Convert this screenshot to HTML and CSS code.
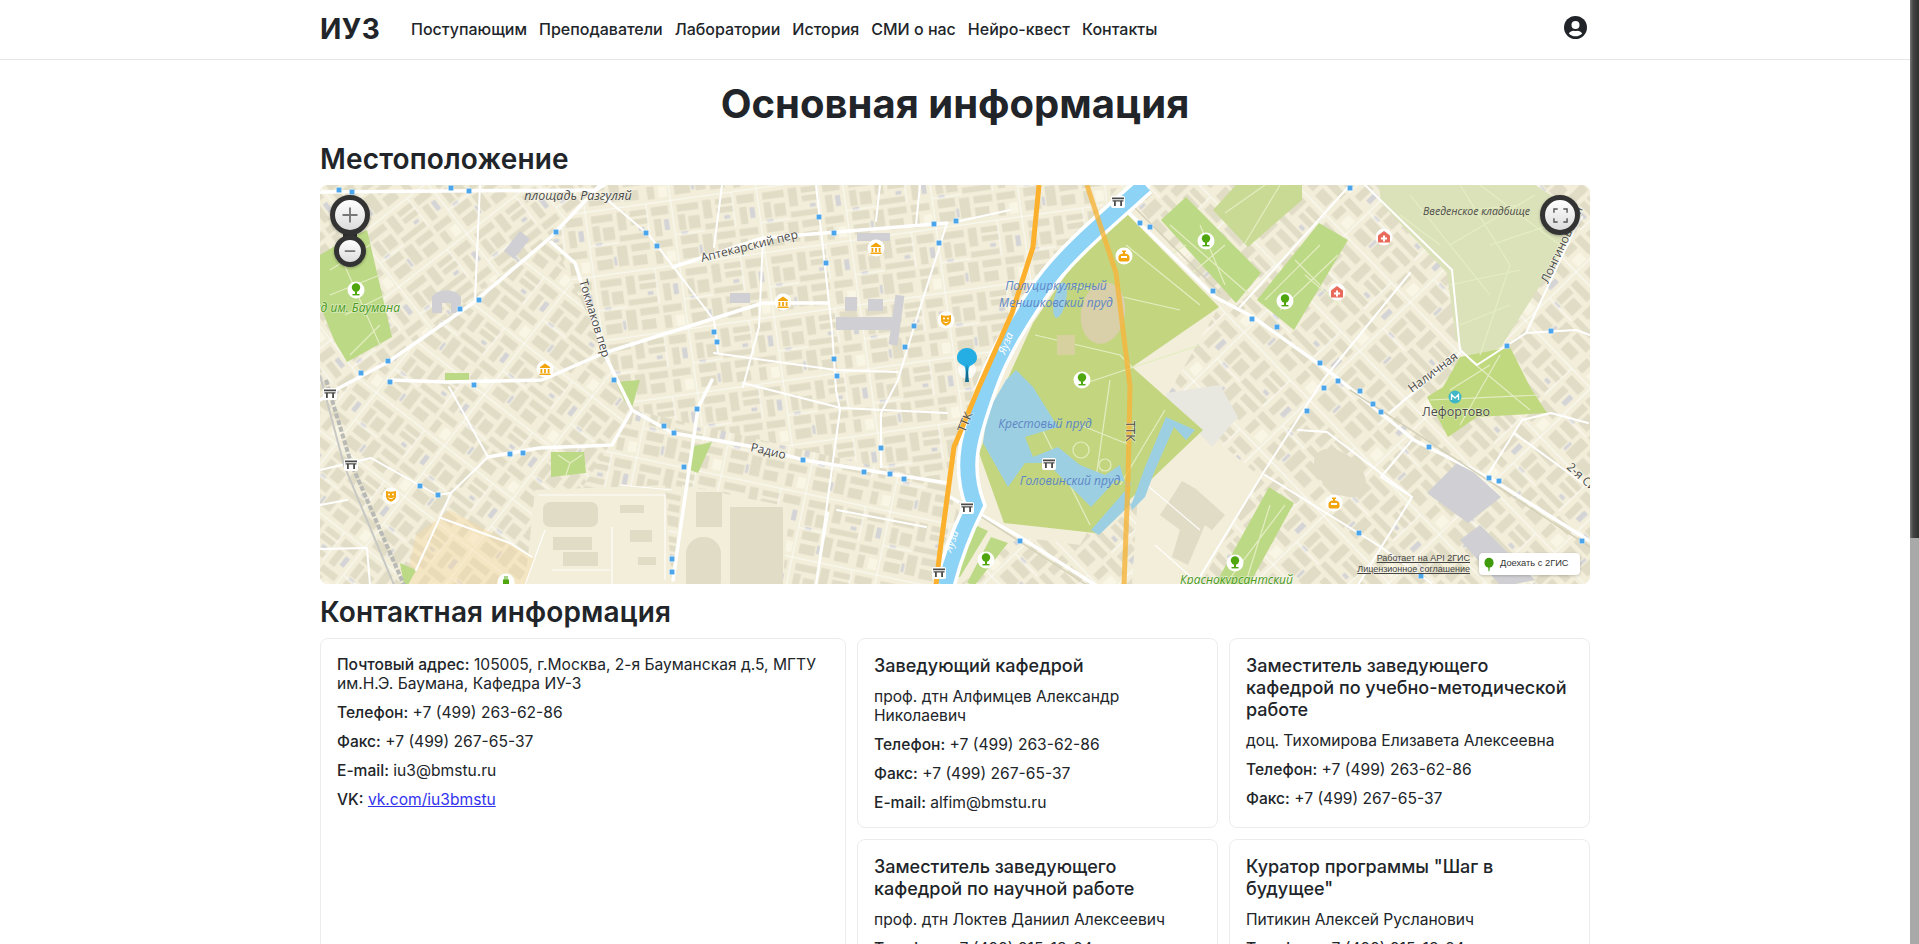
FILE: index.html
```html
<!DOCTYPE html>
<html lang="ru">
<head>
<meta charset="utf-8">
<title>ИУ3 — Основная информация</title>
<link rel="stylesheet" href="styles.css">
</head>
<body>
<header class="navbar">
  <div class="navbar-inner">
    <a class="brand" href="#">ИУЗ</a>
    <nav class="nav">
      <a href="#">Поступающим</a>
      <a href="#">Преподаватели</a>
      <a href="#">Лаборатории</a>
      <a href="#">История</a>
      <a href="#">СМИ о нас</a>
      <a href="#">Нейро-квест</a>
      <a href="#">Контакты</a>
    </nav>
    <svg class="user-icon" viewBox="0 0 24 24" aria-label="Профиль">
      <circle cx="12" cy="12" r="12" fill="#212529"/>
      <circle cx="12" cy="9.4" r="4.2" fill="#fff"/>
      <path fill="#fff" d="M12 21.2c-2.7 0-5.200-1.100-6.900-3 1.100-1.800 3-2.900 5-2.900.6 0 1.200.4 1.900.4s1.300-.4 1.900-.4c2 0 3.900 1.100 5 2.900-1.700 1.900-4.200 3-6.900 3z"/>
    </svg>
  </div>
</header>

<main class="content">
  <h1 class="page-title">Основная информация</h1>
  <h2 class="section-title section-first">Местоположение</h2>

  <div class="map">
    <svg class="map-canvas" viewBox="0 0 1270 400" width="1270" height="400">
      <defs>
        <g id="tile">
          <rect width="120" height="90" fill="#f2eeda"/>
          <g fill="#e0dcc6">
            <rect x="6" y="6" width="30" height="10"/><rect x="6" y="20" width="10" height="22"/><rect x="42" y="5" width="12" height="26"/>
            <rect x="60" y="6" width="24" height="8"/><rect x="60" y="18" width="24" height="8"/><rect x="90" y="5" width="24" height="12"/>
            <rect x="92" y="22" width="10" height="24"/><rect x="20" y="24" width="16" height="18"/><rect x="42" y="38" width="40" height="8"/>
            <rect x="6" y="50" width="24" height="12"/><rect x="36" y="52" width="14" height="28"/><rect x="56" y="52" width="26" height="10"/>
            <rect x="56" y="68" width="20" height="14"/><rect x="88" y="52" width="26" height="10"/><rect x="88" y="66" width="10" height="18"/>
            <rect x="6" y="68" width="22" height="14"/>
          </g>
          <g fill="#d4d4d7">
            <rect x="70" y="30" width="8" height="5"/><rect x="106" y="24" width="7" height="15"/><rect x="30" y="66" width="4" height="12"/><rect x="8" y="44" width="9" height="4"/>
          </g>
          <rect x="104" y="68" width="12" height="15" fill="#f9f6e6"/>
          <path d="M0 89H120M119 0V90M0 47H40M84 0V48" stroke="#fff" stroke-width="1.200" fill="none" opacity=".85"/>
        </g>
        <pattern id="cityA" width="120" height="90" patternUnits="userSpaceOnUse" patternTransform="rotate(-38) scale(.72)"><use href="#tile"/></pattern>
        <pattern id="cityB" width="120" height="90" patternUnits="userSpaceOnUse" patternTransform="rotate(-8) scale(.72)"><use href="#tile"/></pattern>
        <pattern id="cityC" width="120" height="90" patternUnits="userSpaceOnUse" patternTransform="rotate(38) scale(.72)"><use href="#tile"/></pattern>
        <pattern id="cityD" width="120" height="90" patternUnits="userSpaceOnUse" patternTransform="rotate(12) scale(.72) translate(30 10)"><use href="#tile"/></pattern>
        <pattern id="cityE" width="120" height="90" patternUnits="userSpaceOnUse" patternTransform="rotate(46) scale(.78)"><use href="#tile"/></pattern>

        <g id="poi-bg"><circle r="8.500" fill="#fff"/></g>
        <g id="i-tree">
          <use href="#poi-bg"/>
          <circle cy="-2.500" r="4.200" fill="#4fa60e"/><rect x="-1" y="0" width="2" height="5" fill="#4fa60e"/><rect x="-3.500" y="4" width="7" height="1.400" fill="#4fa60e"/>
        </g>
        <g id="i-museum">
          <use href="#poi-bg"/>
          <path fill="#f2a50c" d="M-5-2 0-5.500 5-2v1H-5zM-4.500 0h1.800v4h-1.800zM-.9 0H.9v4H-.9zM2.700 0h1.800v4H2.700zM-5.500 4.500h11V6h-11z"/>
        </g>
        <g id="i-theatre">
          <use href="#poi-bg"/>
          <path fill="#f2a50c" d="M-5-5C-2-4 2-4 5-5V0C5 3 2 5.500 0 5.500S-5 3-5 0z"/>
          <circle cx="-2" cy="-1.500" r="1" fill="#fff"/><circle cx="2" cy="-1.500" r="1" fill="#fff"/><path d="M-2.500 1.500C-1 3 1 3 2.500 1.500" stroke="#fff" fill="none"/>
        </g>
        <g id="i-bottle">
          <use href="#poi-bg"/>
          <path fill="#f2a50c" d="M-2-5.500h4V-4H1v1.500c2 0 4.500 1.500 4.500 3.500v2.500C5.500 5 4 5.500 3 5.500h-6C-4 5.500-5.500 5-5.500 3.500V1C-5.500-1-3-2.500-1-2.500V-4H-2z"/>
          <rect x="-3" y="0" width="6" height="2" fill="#fff"/>
        </g>
        <g id="i-hospital">
          <use href="#poi-bg"/>
          <path fill="#e96a5b" d="M0-6 6-1.500V5.500H-6V-1.500z"/>
          <path fill="#fff" d="M-1-1.500H1V.5H3V2.500H1V4.500H-1V2.500H-3V.5H-1z"/>
        </g>
        <g id="i-bridge">
          <rect x="-7" y="-6" width="14" height="12" rx="2" fill="#fff"/>
          <path fill="#4a4a48" d="M-6-4.500H6V-2.800H-6zM-5.500-1.800H5.500V-.6H-5.500zM-4-.6h1.800V4H-4zM2.200-.6H4V4H2.200z"/>
        </g>
        <g id="i-plug">
          <use href="#poi-bg"/>
          <path fill="#4fa60e" d="M-3-2.500h1.500V-6H-.5V-2.500H.5V-6h1V-2.500H3V2C3 3.500 2 4 1 4V6H-1V4C-2 4-3 3.500-3 2z"/>
        </g>
        <rect id="stop" x="-2.700" y="-2.700" width="5.400" height="5.400" rx="1.200" fill="#4aa5ea" stroke="#fff" stroke-width=".5"/>
      </defs>

      <rect width="1270" height="400" fill="#f2eeda"/>

      <polygon fill="url(#cityA)" points="0,0 284,0 231,52 68,177 0,215"/>
      <polygon fill="url(#cityB)" points="284,0 800,0 700,120 650,240 627,298 435,262 312,225 231,52"/>
      <polygon fill="url(#cityC)" points="0,215 68,177 231,52 312,225 292,260 200,400 0,400"/>
      <polygon fill="url(#cityD)" points="312,225 627,298 640,330 620,400 200,400"/>
      <polygon fill="url(#cityE)" points="800,0 1270,0 1270,400 640,400 700,352 760,360 900,120"/>

      <polygon fill="#f2eeda" points="215,305 345,300 352,400 205,400"/>
      <polygon fill="#f2eeda" points="362,300 470,322 462,400 352,400"/>
      <polygon fill="#f2eeda" points="820,275 870,232 940,292 880,400 812,400"/>
      <polygon fill="#f7d9a0" opacity=".4" points="96,350 130,325 215,372 205,400 85,400"/>

      <g fill="#e0dcc6">
        <rect x="223" y="317" width="55" height="25" rx="7"/><rect x="233" y="352" width="39" height="13"/><rect x="243" y="367" width="35" height="14"/>
        <rect x="410" y="322" width="53" height="77"/><rect x="376" y="307" width="26" height="35"/>
        <rect x="366" y="352" width="35" height="60" rx="17"/>
        <rect x="300" y="320" width="24" height="8"/><rect x="310" y="345" width="22" height="12"/><rect x="318" y="372" width="18" height="8"/>
        <path d="M862 296 876 304 905 330 892 345 885 340 868 380 852 372 860 345 840 330 848 318z"/>
        <ellipse cx="1020" cy="288" rx="30" ry="19" transform="rotate(40 1020 288)"/>
      </g>
      <g fill="none" stroke="#fff" stroke-width="1.200" opacity=".9">
        <path d="M218 310H345V395M225 345 205 400M292 342V400M352 305 300 300M232 385H290"/>
        <path d="M815 290 880 345M835 360 880 400"/>
      </g>
      <polygon fill="#e9e8e0" points="846,208 900,200 918,232 892,262 872,240 850,228"/>
      <g fill="#d0d0d4">
        <polygon points="1107,308 1140,275 1181,312 1148,338"/>
        <path d="M112 128V112a15 9 0 0 1 29 0V128h-10V118h-9v10z"/>
        <rect x="516" y="132" width="61" height="13"/><rect x="537" y="48" width="33" height="8"/>
        <polygon points="184,66 200,46 210,54 194,74"/>
        <rect x="572" y="110" width="9" height="50" transform="rotate(8 576 135)"/>
        <rect x="525" y="112" width="12" height="14"/><rect x="548" y="114" width="15" height="12"/>
        <rect x="410" y="108" width="20" height="10"/>
        <polygon points="1140,355 1160,340 1215,395 1190,400 1180,400"/>
        <rect x="845" y="240" width="6" height="34" transform="rotate(30 848 257)"/>
      </g>

      <!-- parks -->
      <polygon fill="#dbe2ba" points="1059,0 1215,0 1262,30 1219,102 1181,162 1152,178 1136,155 1127,88 1061,18"/>
      <g fill="#bcd985">
        <polygon points="841,35 866,12 941,88 916,118"/>
        <polygon points="937,115 999,38 1028,55 974,145"/>
        <polygon points="949,302 974,318 929,400 895,400"/>
        <polygon points="0,70 25,55 47,45 72,152 27,177 14,155 0,120"/>
        <polygon points="125,188 149,188 149,197 125,197"/>
        <polygon points="296,197 320,195 312,223 304,215"/>
        <polygon points="231,267 264,267 266,288 231,292"/>
        <polygon points="370,262 392,257 378,288 370,285"/>
        <polygon points="80,378 96,385 88,400 84,400"/>
        <polygon points="671,352 688,358 655,400 647,398"/>
        <polygon points="655,340 668,346 640,392 630,392"/>
      </g>
      <polygon fill="#c8da93" points="893,25 916,0 982,0 982,15 928,62"/>
      <polygon fill="#c0d97f" points="1107,212 1123,202 1140,172 1190,162 1210,202 1227,228 1157,232 1128,252"/>
      <polygon fill="#c3d67f" points="806,28 899,122 812,182 883,245 775,348 684,338 659,268 684,202 713,138 754,78"/>
      <g fill="none" stroke="#e4edc2" stroke-width="1.200">
        <path d="M806 60 880 120M750 100 860 125M715 150 800 170 812 182M760 200 880 160M700 200 770 340M760 240 810 260M790 195 775 300M845 225 800 300"/>
        <path d="M850 40 930 110M866 60 850 70M880 40 905 100M905 60 870 90M905 28 945 0M925 58 960 0"/>
        <path d="M945 115 1000 60M960 125 1018 70M985 90 1020 120M975 75 1000 100"/>
        <circle cx="761" cy="265" r="8"/><circle cx="785" cy="280" r="6"/>
        <path d="M1080 30 1120 60M1140 0 1190 80 1160 170M1100 30 1200 20M1170 60 1230 40M1130 100 1200 85M1140 140 1190 120M1090 10 1170 110M1215 10 1130 60M1160 0 1240 60"/>
        <path d="M1130 205 1170 180M1150 175 1210 225M1180 170 1140 240M1110 215 1220 210"/>
        <path d="M950 320 925 400M965 320 905 400"/>
        <path d="M10 85 50 60M20 70 60 160M10 110 60 90M25 130 65 110M30 170 60 140"/>
        <path d="M238 270 250 278 262 270M250 278 246 290"/>
      </g>
      <ellipse cx="783" cy="128" rx="22" ry="31" fill="#d9cfa9" transform="rotate(10 783 128)"/>
      <g fill="#d7d09f"><rect x="737" y="150" width="18" height="20"/></g>

      <!-- ponds -->
      <path fill="#9ccfe2" d="M686 195 667 228 663 258 688 302 705 278 727 278 771 322 796 295 812 298 771 345 779 350 812 318 825 282 846 232 875 245 866 255 854 242 835 285 825 312 812 325 800 280 785 290 760 280 738 262 713 272 705 252 738 242 713 202 696 185z"/>
      <ellipse cx="740" cy="115" rx="6" ry="18" fill="#9ccfe2" transform="rotate(12 740 115)"/>

      <!-- roads -->
      <g fill="none" stroke="#fff" stroke-linecap="round" stroke-linejoin="round">
        <g stroke-width="2">
          <path d="M284 12 329 50 394 135 398 168"/>
          <path d="M496 0 512 145 516 205 520 225 496 400"/>
          <path d="M402 0 394 62M443 55 439 142 423 202"/>
          <path d="M627 38 594 142 578 195 561 228 561 282"/>
          <path d="M394 168 516 185 578 187M423 198 521 223 627 228"/>
          <path d="M129 202 168 272 131 308 96 385"/>
          <path d="M0 285 51 273 117 310 131 308"/>
          <path d="M121 333 190 358 212 372"/>
          <path d="M0 320 27 315M0 364 47 363 50 400"/>
          <path d="M517 325 606 342M508 328 496 400"/>
          <path d="M1132 85 1140 165M1090 88 1003 195 945 285 875 400"/>
          <path d="M945 290 1061 362 1111 398"/>
          <path d="M1092 255 1061 292 1092 312 1038 400"/>
          <path d="M978 245 1007 247 1092 312"/>
          <path d="M1169 288 1202 235 1231 228 1268 238"/>
          <path d="M1194 248 1268 302"/>
          <path d="M1140 168 1069 228"/>
          <path d="M1252 50 1206 148M1262 32 1252 50"/>
          <path d="M1030 0 920 122"/>
          <path d="M1045 0 1132 85"/>
          <path d="M1140 165 1157 180 1206 148 1256 145 1270 150"/>
          <path d="M160 0 155 115M600 0 596 40M560 0 556 36"/>
          <path d="M640 36 690 25"/>
        </g>
        <g stroke-width="3.500">
          <path d="M0 7 276 5 284 0"/>
          <path d="M280 0 231 52 153 118 68 177 19 203 0 215"/>
          <path d="M231 57 255 78 284 168 312 225 353 248 435 262 484 275 627 298"/>
          <path d="M353 82 443 53 627 38"/>
          <path d="M72 195 125 197 222 195 284 168 443 118 508 118"/>
          <path d="M392 195 378 223 353 395"/>
          <path d="M168 272 219 263 292 260 312 225"/>
          <path d="M806 25 895 112 933 132 1003 182 1020 195 1094 255 1173 295 1268 355"/>
          <path d="M829 0 806 25"/>
          <path d="M630 312 700 352 775 400"/>
        </g>
        <path stroke-width="1.500" stroke="#d5d1b9" d="M812 20 900 108M640 318 770 402M1030 205 1270 362"/>
      </g>

      <!-- rail -->
      <path d="M6 195 31 278 84 400" fill="none" stroke="#b9b9b6" stroke-width="4" stroke-dasharray="5 2"/>
      <path d="M0 190 24 280 74 400" fill="none" stroke="#c8c8c4" stroke-width="2"/>

      <!-- river and highways -->
      <path d="M825 0C780 40 742 72 720 105 700 135 680 165 667 202 650 250 640 280 655 320 640 350 630 380 625 400" fill="none" stroke="#fff" stroke-width="22"/>
      <path d="M825 0C780 40 742 72 720 105 700 135 680 165 667 202 650 250 640 280 655 320 640 350 630 380 625 400" fill="none" stroke="#8dd3f6" stroke-width="15"/>
      <path d="M719 0 713 62 692 128 659 202 634 262 620 366 616 400" fill="none" stroke="#fcb02c" stroke-width="5"/>
      <path d="M767 0 796 88 810 202 808 295 804 400" fill="none" stroke="#f5b53c" stroke-width="5" opacity=".82"/>

      <!-- stops -->
      <g>
        <use href="#stop" x="19" y="5"/><use href="#stop" x="32" y="7"/><use href="#stop" x="131" y="3"/><use href="#stop" x="149" y="6"/><use href="#stop" x="236" y="47"/>
        <use href="#stop" x="159" y="115"/><use href="#stop" x="140" y="124"/><use href="#stop" x="68" y="176"/><use href="#stop" x="41" y="188"/><use href="#stop" x="70" y="197"/>
        <use href="#stop" x="154" y="200"/><use href="#stop" x="294" y="195"/><use href="#stop" x="326" y="48"/><use href="#stop" x="337" y="61"/><use href="#stop" x="499" y="32"/>
        <use href="#stop" x="514" y="48"/><use href="#stop" x="614" y="39"/><use href="#stop" x="619" y="58"/><use href="#stop" x="506" y="78"/><use href="#stop" x="394" y="147"/>
        <use href="#stop" x="397" y="157"/><use href="#stop" x="594" y="141"/><use href="#stop" x="585" y="162"/><use href="#stop" x="514" y="174"/><use href="#stop" x="517" y="191"/>
        <use href="#stop" x="377" y="224"/><use href="#stop" x="344" y="241"/><use href="#stop" x="354" y="248"/><use href="#stop" x="190" y="269"/><use href="#stop" x="203" y="268"/>
        <use href="#stop" x="364" y="282"/><use href="#stop" x="483" y="275"/><use href="#stop" x="561" y="263"/><use href="#stop" x="544" y="287"/><use href="#stop" x="570" y="289"/>
        <use href="#stop" x="584" y="294"/><use href="#stop" x="100" y="301"/><use href="#stop" x="118" y="310"/><use href="#stop" x="352" y="374"/><use href="#stop" x="352" y="387"/>
        <use href="#stop" x="636" y="36"/><use href="#stop" x="820" y="38"/><use href="#stop" x="830" y="42"/><use href="#stop" x="893" y="106"/><use href="#stop" x="932" y="134"/>
        <use href="#stop" x="957" y="142"/><use href="#stop" x="1000" y="178"/><use href="#stop" x="1030" y="3"/><use href="#stop" x="1004" y="203"/><use href="#stop" x="1018" y="196"/>
        <use href="#stop" x="1187" y="161"/><use href="#stop" x="1231" y="146"/><use href="#stop" x="1040" y="206"/><use href="#stop" x="1053" y="219"/><use href="#stop" x="1061" y="227"/>
        <use href="#stop" x="987" y="226"/><use href="#stop" x="1109" y="262"/><use href="#stop" x="1169" y="293"/><use href="#stop" x="1179" y="296"/><use href="#stop" x="1039" y="348"/>
        <use href="#stop" x="1101" y="391"/><use href="#stop" x="1262" y="356"/><use href="#stop" x="700" y="356"/>
      </g>

      <!-- poi -->
      <use href="#i-tree" x="36" y="105"/><use href="#i-tree" x="886" y="56"/><use href="#i-tree" x="965" y="116"/><use href="#i-tree" x="762" y="195"/><use href="#i-tree" x="666" y="375"/><use href="#i-tree" x="915" y="378"/>
      <use href="#i-museum" x="556" y="63"/><use href="#i-museum" x="463" y="117"/><use href="#i-museum" x="225" y="184"/>
      <use href="#i-theatre" x="626" y="135"/><use href="#i-theatre" x="71" y="311"/>
      <use href="#i-bottle" x="804" y="71"/><use href="#i-bottle" x="1014" y="318"/>
      <use href="#i-hospital" x="1064" y="52"/><use href="#i-hospital" x="1017" y="107"/>
      <use href="#i-bridge" x="798" y="17"/><use href="#i-bridge" x="729" y="279"/><use href="#i-bridge" x="647" y="323"/><use href="#i-bridge" x="10" y="209"/><use href="#i-bridge" x="31" y="280"/><use href="#i-bridge" x="619" y="388"/>
      <use href="#i-plug" x="186" y="397"/>
      <circle cx="1135" cy="212" r="6.500" fill="#3fb7c6"/>
      <path d="M1131.500 215V209.500L1135 213 1138.500 209.500V215" fill="none" stroke="#fff" stroke-width="1.300"/>

      <!-- labels -->
      <g class="map-label">
        <text class="lbl-it" x="258" y="15" text-anchor="middle">площадь Разгуляй</text>
        <text x="0" y="0" transform="translate(382 77) rotate(-14)">Аптекарский пер</text>
        <text x="0" y="0" transform="translate(259 96) rotate(73)">Токмаков пер</text>
        <text class="lbl-park" x="80" y="127" text-anchor="end">Сад им. Баумана</text>
        <text x="0" y="0" transform="translate(430 266) rotate(13)">Радио</text>
        <text x="0" y="0" transform="translate(645 248) rotate(-68)">ТТК</text>
        <text x="0" y="0" transform="translate(806 236) rotate(90)">ТТК</text>
        <text class="lbl-river" transform="translate(685 170) rotate(-68)">Яуза</text>
        <text class="lbl-river" transform="translate(631 368) rotate(-70)">Яуза</text>
        <text class="lbl-water" x="736" y="105" text-anchor="middle">Полуциркулярный</text>
        <text class="lbl-water" x="736" y="122" text-anchor="middle">Меншиковский пруд</text>
        <text class="lbl-water" x="725" y="243" text-anchor="middle">Крестовый пруд</text>
        <text class="lbl-water" x="750" y="300" text-anchor="middle">Головинский пруд</text>
        <text class="lbl-small" x="1103" y="30">Введенское кладбище</text>
        <text x="0" y="0" transform="translate(1228 99) rotate(-65)">Лонгиновская</text>
        <text x="0" y="0" transform="translate(1092 208) rotate(-37)">Наличная</text>
        <text class="lbl-metro" x="1136" y="231" text-anchor="middle">Лефортово</text>
        <text x="0" y="0" transform="translate(1246 283) rotate(42)">2-я Синичкина</text>
        <text class="lbl-park" x="860" y="399">Краснокурсантский</text>
      </g>
    </svg>

    <div class="zoom-stack">
      <span class="zoom-neck"></span>
      <button class="map-btn map-btn-lg" aria-label="Приблизить">
        <svg viewBox="0 0 16 16"><path d="M8 2V14M2 8H14" stroke="#777" stroke-width="1.500" fill="none"/></svg>
      </button>
      <button class="map-btn map-btn-sm" aria-label="Отдалить">
        <svg viewBox="0 0 16 16"><path d="M2 8H14" stroke="#777" stroke-width="2" fill="none"/></svg>
      </button>
    </div>
    <button class="map-btn map-btn-lg map-fullscreen" aria-label="На весь экран">
      <svg viewBox="0 0 16 16"><path d="M1 5V1H5M11 1H15V5M15 11V15H11M5 15H1V11" stroke="#555" stroke-width="1.500" fill="none"/></svg>
    </button>

    <div class="map-credits">
      <a href="#">Работает на API 2ГИС</a>
      <a href="#">Лицензионное соглашение</a>
    </div>
    <a class="map-route" href="#">
      <svg viewBox="0 0 12 16"><ellipse cx="6" cy="6" rx="5.500" ry="6" fill="#3f9a0c"/><path d="M5 10H7L6.500 16H5.500Z" fill="#3f9a0c"/></svg>
      <span>Доехать с 2ГИС</span>
    </a>
    <svg class="map-pin" viewBox="0 0 24 34">
      <circle cx="12" cy="22" r="9" fill="#fff" opacity=".75"/>
      <path d="M12 0C18 0 22 4.500 22 9.500 22 14 19 16 15 18 13.500 19 13.200 24 13 34H11C10.800 24 10.500 19 9 18 5 16 2 14 2 9.500 2 4.500 6 0 12 0Z" fill="#25aee3"/>
      <path d="M12 16 14 34H10Z" fill="#146c90"/>
    </svg>
  </div>

  <h2 class="section-title section-contacts">Контактная информация</h2>

  <div class="contacts">
    <section class="card card-main">
      <p><b>Почтовый адрес:</b> 105005, г.Москва, 2-я Бауманская д.5, МГТУ им.Н.Э. Баумана, Кафедра ИУ-3</p>
      <p><b>Телефон:</b> +7 (499) 263-62-86</p>
      <p><b>Факс:</b> +7 (499) 267-65-37</p>
      <p><b>E-mail:</b> iu3@bmstu.ru</p>
      <p><b>VK:</b> <a href="#">vk.com/iu3bmstu</a></p>
    </section>
    <section class="card">
      <h3>Заведующий кафедрой</h3>
      <p>проф. дтн Алфимцев Александр Николаевич</p>
      <p><b>Телефон:</b> +7 (499) 263-62-86</p>
      <p><b>Факс:</b> +7 (499) 267-65-37</p>
      <p><b>E-mail:</b> alfim@bmstu.ru</p>
    </section>
    <section class="card">
      <h3>Заместитель заведующего кафедрой по учебно-методической работе</h3>
      <p>доц. Тихомирова Елизавета Алексеевна</p>
      <p><b>Телефон:</b> +7 (499) 263-62-86</p>
      <p><b>Факс:</b> +7 (499) 267-65-37</p>
    </section>
    <section class="card">
      <h3>Заместитель заведующего кафедрой по научной работе</h3>
      <p>проф. дтн Локтев Даниил Алексеевич</p>
      <p><b>Телефон:</b> +7 (499) 915-13-24</p>
      <p><b>Факс:</b> +7 (499) 267-65-37</p>
    </section>
    <section class="card">
      <h3>Куратор программы "Шаг в будущее"</h3>
      <p>Питикин Алексей Русланович</p>
      <p><b>Телефон:</b> +7 (499) 915-13-24</p>
      <p><b>Факс:</b> +7 (499) 267-65-37</p>
    </section>
  </div>
</main>

<div class="scrollbar" aria-hidden="true"><div class="scrollbar-thumb"></div></div>
</body>
</html>
```
FILE: styles.css
```css
* { box-sizing: border-box; }
html { background: #fff; }
body {
  margin: 0;
  width: 1910px;
  color: #212529;
  font-family: "Inter", "Noto Sans", "Liberation Sans", sans-serif;
  font-size: 16px;
  line-height: 1.2;
  min-height: 1656px;
}
.scrollbar {
  position: fixed;
  top: 0;
  right: 0;
  width: 9px;
  height: 100vh;
  background: #a9a9a9;
}
.scrollbar-thumb {
  height: 538px;
  background: linear-gradient(90deg, #777 0, #444 35%, #2f2f2f 100%);
}
.navbar {
  height: 60px;
  border-bottom: 1px solid #e6e6e6;
}
.navbar-inner {
  width: 1270px;
  height: 59px;
  margin: 0 auto;
  display: flex;
  align-items: center;
}
.brand {
  font-size: 28px;
  font-weight: 700;
  color: #212529;
  text-decoration: none;
  width: 91px;
  letter-spacing: .5px;
}
.nav { display: flex; gap: 12px; flex: 1; }
.nav a {
  color: #212529;
  text-decoration: none;
  font-weight: 500;
  font-size: 16px;
}
.user-icon { width: 23px; height: 23px; margin-right: 3px; margin-top: -4px; }
.content { width: 1270px; margin: 0 auto; }
.page-title {
  margin: 20px 0 0;
  font-size: 40px;
  line-height: 48px;
  font-weight: 700;
  text-align: center;
}
.section-title {
  margin: 0;
  font-size: 28px;
  line-height: 34px;
  font-weight: 600;
  letter-spacing: .15px;
}
.section-first { margin-top: 14px; margin-bottom: 9px; }
.section-contacts { margin-top: 11px; margin-bottom: 9px; }
.map {
  position: relative;
  height: 399px;
  border-radius: 8px;
  overflow: hidden;
  background: #f2eeda;
}
.map-canvas { display: block; }
.map-label text {
  font-family: "Open Sans", "Noto Sans", sans-serif;
  font-size: 12px;
  fill: #4b4b48;
  paint-order: stroke;
  stroke: rgba(255, 255, 255, .45);
  stroke-width: 1.5px;
}
.map-label .lbl-it { font-style: italic; font-size: 12.5px; }
.map-label .lbl-park { font-style: italic; fill: #4a9a1a; font-size: 12px; }
.map-label .lbl-water { font-style: italic; fill: #5e86c6; font-size: 12px; stroke: none; }
.map-label .lbl-river { fill: #fff; font-style: italic; font-size: 11px; stroke: none; }
.map-label .lbl-small { font-style: italic; font-size: 10.5px; stroke: none; }
.map-label .lbl-metro { font-size: 12.5px; }
.zoom-stack {
  position: absolute;
  left: 10px;
  top: 10px;
  width: 40px;
  height: 72px;
  display: flex;
  flex-direction: column;
  align-items: center;
  gap: 0;
}
.zoom-neck {
  position: absolute;
  left: 13px;
  top: 30px;
  width: 14px;
  height: 20px;
  background: #333;
}
.map-btn {
  position: relative;
  display: flex;
  align-items: center;
  justify-content: center;
  padding: 0;
  border-radius: 50%;
  border: 5px solid #333;
  background: linear-gradient(#fff, #dcdcdc);
  box-shadow: 0 1px 3px rgba(0, 0, 0, .3);
}
.map-btn-lg { width: 40px; height: 40px; }
.map-btn-sm { width: 32px; height: 32px; }
.map-btn-lg svg { width: 20px; height: 20px; }
.map-btn-sm svg { width: 14px; height: 14px; }
.map-fullscreen { position: absolute; right: 10px; top: 10px; }
.map-fullscreen svg { width: 15px; height: 15px; }
.map-credits {
  position: absolute;
  right: 120px;
  top: 368px;
  display: flex;
  flex-direction: column;
  align-items: flex-end;
  gap: 1px;
  font-family: "Liberation Sans", sans-serif;
  font-size: 9px;
  line-height: 10px;
}
.map-credits a { color: #444; text-decoration: underline; }
.map-route {
  position: absolute;
  left: 1159px;
  top: 368px;
  width: 101px;
  height: 22px;
  display: flex;
  align-items: center;
  gap: 6px;
  padding-left: 5px;
  background: #fff;
  border-radius: 4px;
  box-shadow: 0 1px 3px rgba(0, 0, 0, .2);
  color: #333;
  font-family: "Liberation Sans", sans-serif;
  font-size: 9.3px;
  text-decoration: none;
}
.map-route svg { width: 10px; height: 15px; flex: none; }
.map-pin {
  position: absolute;
  left: 635px;
  top: 163px;
  width: 24px;
  height: 34px;
}
.contacts {
  display: grid;
  grid-template-columns: 526px 361px 361px;
  column-gap: 11px;
  row-gap: 11px;
  justify-content: space-between;
}
.card {
  border: 1px solid #ececec;
  border-radius: 8px;
  padding: 16px 16px 15px;
  min-height: 190px;
}
.card-main { grid-row: span 2; }
.card h3 {
  margin: 0 0 10px;
  font-size: 18px;
  line-height: 22px;
  font-weight: 500;
}
.card p { margin: 0 0 10px; font-size: 15.6px; line-height: 19px; }
.card p:last-child { margin-bottom: 0; }
.card b { font-weight: 500; }
.card a { color: #3333ee; }
```
